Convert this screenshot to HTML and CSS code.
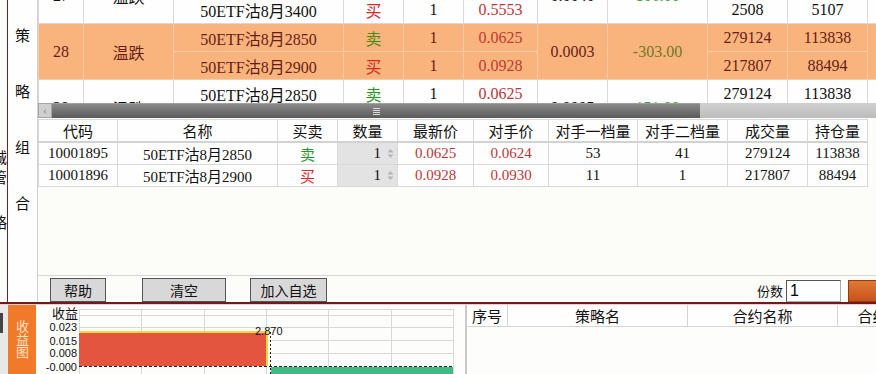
FILE: index.html
```html
<!DOCTYPE html>
<html lang="zh-CN">
<head>
    <meta charset="UTF-8">
    <meta name="viewport" content="width=device-width, initial-scale=1.0">
    <title>策略组合</title>
    <link rel="stylesheet" href="styles.css">
</head>
<body>
    <div class="main">
        <!-- cut-off panel on the far left -->
        <div class="edge">
            <span class="edge-a">诚</span>
            <span class="edge-b">管</span>
            <span class="edge-c">略</span>
        </div>
        <div class="side-label">策略组合</div>

        <div class="content">
            <!-- Strategy list (scrolled) -->
            <div class="grid-view">
                <table class="combo-table">
                    <colgroup>
                        <col style="width:45px"><col style="width:90px"><col style="width:170px">
                        <col style="width:60px"><col style="width:60px"><col style="width:74px">
                        <col style="width:70px"><col style="width:100px"><col style="width:80px">
                        <col style="width:80px"><col style="width:60px">
                    </colgroup>
                    <tr>
                        <td rowspan="2">27</td><td rowspan="2">温跌</td>
                        <td>50ETF沽8月3350</td><td class="buy">买</td><td>1</td><td class="price">0.6210</td>
                        <td rowspan="2">0.0040</td><td rowspan="2" class="pnl">106.00</td>
                        <td>1860</td><td>4312</td><td rowspan="2"></td>
                    </tr>
                    <tr>
                        <td>50ETF沽8月3400</td><td class="buy">买</td><td>1</td><td class="price">0.5553</td>
                        <td>2508</td><td>5107</td>
                    </tr>
                    <tr class="hl">
                        <td rowspan="2">28</td><td rowspan="2">温跌</td>
                        <td>50ETF沽8月2850</td><td class="sell">卖</td><td>1</td><td class="price">0.0625</td>
                        <td rowspan="2">0.0003</td><td rowspan="2" class="pnl">-303.00</td>
                        <td>279124</td><td>113838</td><td rowspan="2"></td>
                    </tr>
                    <tr class="hl">
                        <td>50ETF沽8月2900</td><td class="buy">买</td><td>1</td><td class="price">0.0928</td>
                        <td>217807</td><td>88494</td>
                    </tr>
                    <tr>
                        <td rowspan="2">29</td><td rowspan="2">温跌</td>
                        <td>50ETF沽8月2850</td><td class="sell">卖</td><td>1</td><td class="price">0.0625</td>
                        <td rowspan="2">0.0005</td><td rowspan="2" class="pnl">151.00</td>
                        <td>279124</td><td>113838</td><td rowspan="2"></td>
                    </tr>
                    <tr>
                        <td></td><td></td><td></td><td></td><td></td><td></td>
                    </tr>
                </table>
            </div>

            <div class="hscroll">
                <div class="hscroll-btn">&#8249;</div>
                <div class="hscroll-thumb"><span class="grip"></span></div>
                <div class="hscroll-track"></div>
            </div>

            <!-- Legs of the selected strategy -->
            <table class="legs-table">
                <colgroup>
                    <col style="width:79px"><col style="width:160px"><col style="width:60px">
                    <col style="width:60px"><col style="width:76px"><col style="width:75px">
                    <col style="width:89px"><col style="width:90px"><col style="width:80px">
                    <col style="width:60px">
                </colgroup>
                <tr>
                    <th>代码</th><th>名称</th><th>买卖</th><th>数量</th><th>最新价</th>
                    <th>对手价</th><th>对手一档量</th><th>对手二档量</th><th>成交量</th><th>持仓量</th>
                </tr>
                <tr>
                    <td>10001895</td><td>50ETF沽8月2850</td><td class="sell">卖</td>
                    <td class="qty">1<svg class="spin" width="7" height="11" viewBox="0 0 7 11"><path d="M3.5 1 L6.5 4.5 L0.5 4.5 Z M0.5 6.5 L6.5 6.5 L3.5 10 Z" fill="#b4b4b4"/></svg></td>
                    <td class="price">0.0625</td><td class="price">0.0624</td><td>53</td><td>41</td><td>279124</td><td>113838</td>
                </tr>
                <tr>
                    <td>10001896</td><td>50ETF沽8月2900</td><td class="buy">买</td>
                    <td class="qty">1<svg class="spin" width="7" height="11" viewBox="0 0 7 11"><path d="M3.5 1 L6.5 4.5 L0.5 4.5 Z M0.5 6.5 L6.5 6.5 L3.5 10 Z" fill="#b4b4b4"/></svg></td>
                    <td class="price">0.0928</td><td class="price">0.0930</td><td>11</td><td>1</td><td>217807</td><td>88494</td>
                </tr>
            </table>

            <div class="fill"></div>

            <div class="toolbar">
                <button class="btn btn-help">帮助</button>
                <button class="btn btn-clear">清空</button>
                <button class="btn btn-fav">加入自选</button>
                <span class="share-label">份数</span>
                <input class="share-input" type="text" value="1">
                <button class="order-btn"></button>
            </div>
        </div>
    </div>

    <div class="divider"></div>

    <div class="bottom">
        <div class="bottom-edge"><span class="edge-mark"></span></div>
        <div class="chart-tab">收益图</div>
        <div class="chart">
            <svg width="429" height="69" viewBox="0 0 429 69">
                <text x="16" y="13" class="chart-title">收益</text>
                <g stroke="#d8d8d8" stroke-width="1">
                    <line x1="43" y1="4.5" x2="417" y2="4.5"/>
                    <line x1="43" y1="10.5" x2="417" y2="10.5"/>
                    <line x1="43" y1="22.5" x2="417" y2="22.5"/>
                    <line x1="43" y1="35.5" x2="417" y2="35.5"/>
                    <line x1="43" y1="48.5" x2="417" y2="48.5"/>
                    <line x1="43.5" y1="4" x2="43.5" y2="69"/>
                    <line x1="105.5" y1="4" x2="105.5" y2="69"/>
                    <line x1="168.5" y1="4" x2="168.5" y2="69"/>
                    <line x1="230.5" y1="4" x2="230.5" y2="69"/>
                    <line x1="292.5" y1="4" x2="292.5" y2="69"/>
                    <line x1="355.5" y1="4" x2="355.5" y2="69"/>
                    <line x1="417.5" y1="4" x2="417.5" y2="69"/>
                </g>
                <rect x="43" y="27" width="189" height="34" fill="#e4553f"/>
                <line x1="43" y1="27" x2="232" y2="27" stroke="#f6d53c" stroke-width="2"/>
                <line x1="231" y1="27" x2="231" y2="61" stroke="#f6d53c" stroke-width="2"/>
                <rect x="235" y="62" width="182" height="8" fill="#40b985"/>
                <line x1="43" y1="61.5" x2="417" y2="61.5" stroke="#222" stroke-dasharray="3,2"/>
                <line x1="234.5" y1="27" x2="234.5" y2="69" stroke="#222" stroke-dasharray="2,2"/>
                <text x="219" y="30" class="chart-num">2.870</text>
                <g class="chart-num" text-anchor="end">
                    <text x="41" y="26">0.023</text>
                    <text x="41" y="40">0.015</text>
                    <text x="41" y="52">0.008</text>
                    <text x="41" y="66">-0.000</text>
                </g>
            </svg>
        </div>
        <div class="splitter"></div>
        <div class="list">
            <div class="list-head">
                <span class="lh-no">序号</span>
                <span class="lh-name">策略名</span>
                <span class="lh-contract">合约名称</span>
                <span class="lh-more">合约代码</span>
            </div>
        </div>
    </div>
</body>
</html>
```

FILE: styles.css
```css
* {
    box-sizing: border-box;
}
body {
    margin: 0;
    width: 876px;
    height: 374px;
    overflow: hidden;
    background-color: #fcfcf8;
    font-family: "Liberation Serif", "Noto Sans CJK SC", serif;
    font-size: 15px;
    color: #111;
}
.main {
    display: flex;
    height: 302px;
}
.edge {
    width: 8px;
    border-right: 1px solid #7a1f1f;
    background-color: #fdfdfb;
    overflow: hidden;
    display: flex;
    flex-direction: column;
}
.edge span {
    margin-left: -8px;
    line-height: 20px;
    font-family: "Noto Sans CJK SC", sans-serif;
}
.edge-a {
    margin-top: 147px;
}
.edge-c {
    margin-top: 25px;
}
.side-label {
    width: 30px;
    border-right: 1px solid #cfcfcf;
    background-color: #fefefe;
    writing-mode: vertical-rl;
    padding-top: 28px;
    letter-spacing: 41px;
    line-height: 29px;
    font-family: "Noto Sans CJK SC", sans-serif;
}
.content {
    flex: 1;
    min-width: 0;
    display: flex;
    flex-direction: column;
}

/* strategy list */
.grid-view {
    height: 103px;
    overflow: hidden;
    background-color: #fefefe;
}
.combo-table {
    border-collapse: collapse;
    table-layout: fixed;
    width: 889px;
    margin-top: -33px;
    font-size: 16px;
}
.combo-table td {
    height: 28px;
    padding: 0;
    border: 1px solid #d9d9d9;
    text-align: center;
    white-space: nowrap;
}
.combo-table tr.hl td {
    background-color: #f9b47e;
    color: #6a1c14;
    border-color: #f6cda6;
}
.buy {
    color: #d42a2a;
}
.sell {
    color: #2a962a;
}
.price {
    color: #b8383a;
}
.pnl {
    color: #3aa03a;
}
.combo-table tr.hl td.buy {
    color: #d42a1e;
}
.combo-table tr.hl td.sell {
    color: #4d8a14;
}
.combo-table tr.hl td.price {
    color: #c03a30;
}
.combo-table tr.hl td.pnl {
    color: #6d7a1e;
}

/* horizontal scrollbar */
.hscroll {
    display: flex;
    height: 15px;
    background-color: #c2c2c2;
}
.hscroll-btn {
    width: 14px;
    background-color: #cfcfcf;
    border: 1px solid #a5a5a5;
    color: #888;
    font-size: 12px;
    line-height: 12px;
    text-align: center;
}
.hscroll-thumb {
    width: 648px;
    background: linear-gradient(#8a8a8a, #5a5a5a);
    border-top: 1px solid #a0a0a0;
    display: flex;
    justify-content: center;
    align-items: center;
}
.grip {
    width: 7px;
    height: 7px;
    background: repeating-linear-gradient(#d8d8d8 0 1px, transparent 1px 2px);
}
.hscroll-track {
    flex: 1;
    background: linear-gradient(#d0d0d0, #bcbcbc);
}

/* legs */
.legs-table {
    border-collapse: collapse;
    table-layout: fixed;
    width: 829px;
    margin-top: 1px;
    background-color: #fefefe;
}
.legs-table th {
    height: 22px;
    padding: 0;
    font-weight: normal;
    border: 1px solid #d9d9d9;
    border-bottom: 2px solid #d2d2d2;
    font-family: "Noto Sans CJK SC", sans-serif;
    line-height: 19px;
}
.legs-table td {
    height: 22px;
    padding: 0;
    border: 1px solid #d9d9d9;
    text-align: center;
    white-space: nowrap;
}
.legs-table td.qty {
    background-color: #e3e3e3;
    text-align: right;
    padding-right: 3px;
}
.spin {
    margin-left: 6px;
    vertical-align: -1px;
}
.fill {
    flex: 1;
}

/* buttons row */
.toolbar {
    height: 27px;
    border-top: 1px solid #d6d6d6;
    display: flex;
    align-items: flex-end;
}
.btn {
    height: 24px;
    padding: 0;
    border: 1px solid #555;
    background-color: #d8d8d8;
    font-family: "Noto Sans CJK SC", sans-serif;
    font-size: 14px;
    color: #111;
}
.btn-help {
    width: 56px;
    margin-left: 12px;
}
.btn-clear {
    width: 84px;
    margin-left: 36px;
}
.btn-fav {
    width: 77px;
    margin-left: 24px;
}
.share-label {
    margin-left: auto;
    margin-right: 3px;
    font-family: "Noto Sans CJK SC", sans-serif;
    font-size: 13px;
    line-height: 22px;
}
.share-input {
    width: 55px;
    height: 22px;
    padding: 0 3px;
    border: 1px solid;
    border-color: #555 #aaa #aaa #555;
    background-color: #fff;
    font-family: "Liberation Sans", sans-serif;
    font-size: 16px;
}
.order-btn {
    width: 48px;
    height: 22px;
    margin-left: 7px;
    margin-right: -20px;
    border: 1px solid #9a3a0a;
    background: linear-gradient(#e07a34, #c8521a);
}

.divider {
    height: 2px;
    background-color: #6e1b1b;
}

/* bottom panels */
.bottom {
    display: flex;
    height: 70px;
    border-top: 1px solid #f0cccc;
}
.bottom-edge {
    width: 8px;
    background-color: #e8e8e8;
    padding-top: 8px;
}
.edge-mark {
    display: block;
    width: 3px;
    height: 20px;
    background-color: #444;
}
.chart-tab {
    width: 28px;
    background-color: #f07a2a;
    color: #ffe2c4;
    writing-mode: vertical-rl;
    font-family: "Noto Sans CJK SC", sans-serif;
    font-size: 13px;
    line-height: 28px;
    padding-top: 15px;
}
.chart {
    width: 429px;
    background-color: #fdfdfb;
}
.chart svg {
    display: block;
}
.chart-title {
    font-family: "Noto Sans CJK SC", sans-serif;
    font-size: 13px;
    fill: #111;
}
.chart-num {
    font-family: "Liberation Sans", sans-serif;
    font-size: 11px;
    fill: #111;
}
.splitter {
    width: 2px;
    background-color: #cacaca;
}
.list {
    flex: 1;
    min-width: 0;
    overflow: hidden;
    background-color: #fdfdfb;
}
.list-head {
    display: flex;
    height: 22px;
    border-bottom: 1px solid #d4d4d4;
    background-color: #fefefe;
    font-family: "Noto Sans CJK SC", sans-serif;
    line-height: 21px;
    white-space: nowrap;
}
.list-head span {
    flex: none;
    text-align: center;
    border-right: 1px solid #d4d4d4;
}
.lh-no {
    width: 41px;
}
.lh-name {
    width: 180px;
}
.lh-contract {
    width: 150px;
}
.lh-more {
    width: 100px;
}
```
